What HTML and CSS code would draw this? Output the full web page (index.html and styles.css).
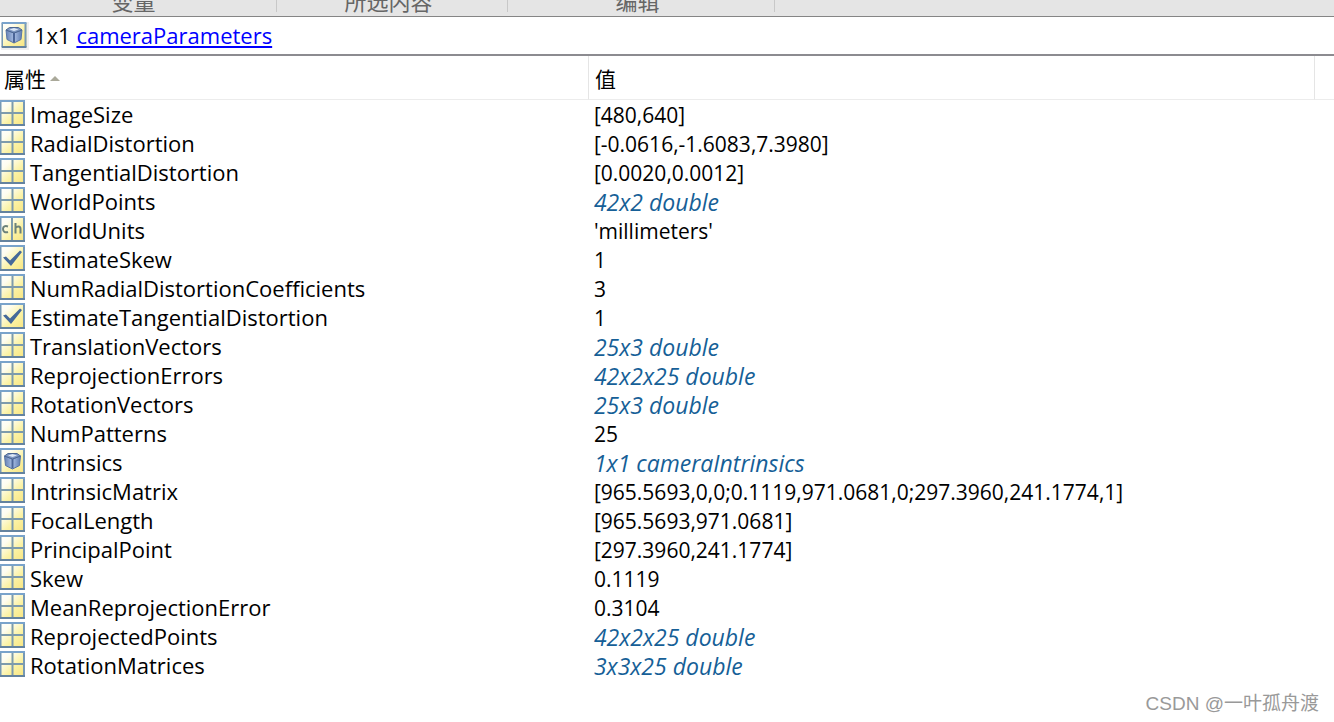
FILE: index.html
```html
<!DOCTYPE html>
<html lang="zh-CN">
<head>
<meta charset="utf-8">
<title>cameraParameters</title>
<link rel="stylesheet" href="styles.css">
</head>
<body>
<svg class="sprite" aria-hidden="true">
  <defs>
    <linearGradient id="paper" x1="0" y1="0" x2="1" y2="1">
      <stop offset="0" stop-color="#ffffff"/><stop offset="0.25" stop-color="#fefdf0"/><stop offset="0.6" stop-color="#fbf2a4"/><stop offset="1" stop-color="#f7e480"/>
    </linearGradient>
    <linearGradient id="frame" x1="0" y1="0" x2="0" y2="1">
      <stop offset="0" stop-color="#79a3cb"/><stop offset="1" stop-color="#64839f"/>
    </linearGradient>
    <linearGradient id="side" x1="0" y1="0" x2="1" y2="0">
      <stop offset="0" stop-color="#6480b4"/><stop offset="0.5" stop-color="#a9bfe4"/><stop offset="1" stop-color="#5e7bb0"/>
    </linearGradient>
    <symbol id="tile" viewBox="0 0 26 26">
      <path d="M0 1H25V25H0Z" fill="url(#paper)"/>
      <path d="M0.500 1V25M24 1V25" fill="none" stroke="#7799b5" stroke-width="2"/>
      <path d="M0 0H25V2H0Z" fill="#79a3cb"/>
      <path d="M0 24H25V26H0Z" fill="#64839f"/>
    </symbol>
    <symbol id="matrix" viewBox="0 0 26 26">
      <use href="#tile"/>
      <path d="M12.500 2V24M1 13H24" fill="none" stroke="#7d9bac" stroke-width="2"/>
    </symbol>
    <symbol id="char" viewBox="0 0 26 26">
      <use href="#tile"/>
      <path d="M12 2V24" fill="none" stroke="#7d9bac" stroke-width="2"/>
      <path d="M8 10.500C5 9.500 3 10.500 3 13S5 17 8 16M15.500 7V17.500M15.500 12C17 10 20.500 9.500 20.500 13V17.500" fill="none" stroke="#6d8279" stroke-width="2"/>
    </symbol>
    <symbol id="logical" viewBox="0 0 26 26">
      <use href="#tile"/>
      <path d="M3 12.500L6 11.500L10 15.500L20 5.500L22 7L11 21Z" fill="#45699a"/>
    </symbol>
    <symbol id="object" viewBox="0 0 26 26">
      <use href="#tile"/>
      <path d="M4.500 8L12.500 11L20.500 8L19.500 17.500L12.500 21L5.500 17.500Z" fill="url(#side)" stroke="#5875a6" stroke-width="1"/>
      <path d="M4.500 8L8 5.500H17L20.500 8L12.500 11Z" fill="#7f98c2" stroke="#4b6692" stroke-width="1"/>
      <path d="M8 7.500L12.500 6L17 7.500L12.500 9Z" fill="#dce7f6"/>
      <path d="M12.500 11V20.500" stroke="#4b6597" stroke-width="2"/>
    </symbol>
  </defs>
</svg>

<header class="ribbon">
  <div class="group group-variable">变量</div>
  <div class="group group-selection">所选内容</div>
  <div class="group group-edit">编辑</div>
</header>

<div class="summary">
  <svg class="icon summary-icon"><use href="#object"/></svg>
  <span>1x1 <a href="#properties">cameraParameters</a></span>
</div>

<main>
  <table class="properties" id="properties">
    <colgroup><col class="col-name"><col class="col-value"><col></colgroup>
    <thead>
      <tr><th scope="col">属性<span class="sort"></span></th><th scope="col">值</th><td></td></tr>
    </thead>
    <tbody>
      <tr><th scope="row"><svg class="icon"><use href="#matrix"/></svg>ImageSize</th><td>[480,640]</td></tr>
      <tr><th scope="row"><svg class="icon"><use href="#matrix"/></svg>RadialDistortion</th><td>[-0.0616,-1.6083,7.3980]</td></tr>
      <tr><th scope="row"><svg class="icon"><use href="#matrix"/></svg>TangentialDistortion</th><td>[0.0020,0.0012]</td></tr>
      <tr><th scope="row"><svg class="icon"><use href="#matrix"/></svg>WorldPoints</th><td class="ref">42x2 double</td></tr>
      <tr><th scope="row"><svg class="icon"><use href="#char"/></svg>WorldUnits</th><td>'millimeters'</td></tr>
      <tr><th scope="row"><svg class="icon"><use href="#logical"/></svg>EstimateSkew</th><td>1</td></tr>
      <tr><th scope="row"><svg class="icon"><use href="#matrix"/></svg>NumRadialDistortionCoefficients</th><td>3</td></tr>
      <tr><th scope="row"><svg class="icon"><use href="#logical"/></svg>EstimateTangentialDistortion</th><td>1</td></tr>
      <tr><th scope="row"><svg class="icon"><use href="#matrix"/></svg>TranslationVectors</th><td class="ref">25x3 double</td></tr>
      <tr><th scope="row"><svg class="icon"><use href="#matrix"/></svg>ReprojectionErrors</th><td class="ref">42x2x25 double</td></tr>
      <tr><th scope="row"><svg class="icon"><use href="#matrix"/></svg>RotationVectors</th><td class="ref">25x3 double</td></tr>
      <tr><th scope="row"><svg class="icon"><use href="#matrix"/></svg>NumPatterns</th><td>25</td></tr>
      <tr><th scope="row"><svg class="icon"><use href="#object"/></svg>Intrinsics</th><td class="ref">1x1 cameraIntrinsics</td></tr>
      <tr><th scope="row"><svg class="icon"><use href="#matrix"/></svg>IntrinsicMatrix</th><td>[965.5693,0,0;0.1119,971.0681,0;297.3960,241.1774,1]</td></tr>
      <tr><th scope="row"><svg class="icon"><use href="#matrix"/></svg>FocalLength</th><td>[965.5693,971.0681]</td></tr>
      <tr><th scope="row"><svg class="icon"><use href="#matrix"/></svg>PrincipalPoint</th><td>[297.3960,241.1774]</td></tr>
      <tr><th scope="row"><svg class="icon"><use href="#matrix"/></svg>Skew</th><td>0.1119</td></tr>
      <tr><th scope="row"><svg class="icon"><use href="#matrix"/></svg>MeanReprojectionError</th><td>0.3104</td></tr>
      <tr><th scope="row"><svg class="icon"><use href="#matrix"/></svg>ReprojectedPoints</th><td class="ref">42x2x25 double</td></tr>
      <tr><th scope="row"><svg class="icon"><use href="#matrix"/></svg>RotationMatrices</th><td class="ref">3x3x25 double</td></tr>
    </tbody>
  </table>
</main>

<footer class="credit">CSDN @一叶孤舟渡</footer>
</body>
</html>
```
FILE: styles.css
```css
* {
  box-sizing: border-box;
}

body {
  margin: 0;
  background: #fff;
  color: #000;
  font: 22px/29px "Open Sans", "Noto Sans CJK SC", sans-serif;
}

.sprite {
  position: absolute;
  width: 0;
  height: 0;
}

.icon {
  flex: none;
  width: 26px;
  height: 26px;
}

.ribbon {
  display: flex;
  align-items: flex-end;
  height: 17px;
  overflow: hidden;
  background: #e5e5e5;
  border-bottom: 1px solid #858585;
  color: #666;
}

.group {
  display: flex;
  flex: none;
  align-items: flex-end;
  justify-content: center;
  height: 29px;
  margin-bottom: 4px;
  border-right: 1px solid #c8c8c8;
  line-height: 22px;
}

.group-variable {
  width: 277px;
  padding-right: 9px;
}

.group-selection {
  width: 231px;
  padding-right: 7px;
}

.group-edit {
  width: 267px;
  padding-right: 7px;
}

.summary {
  display: flex;
  align-items: center;
  gap: 5px;
  height: 39px;
  padding-left: 1px;
  border-bottom: 2px solid #8c8b90;
}

.summary-icon {
  width: 28px;
  height: 28px;
  padding: 0 1px 2px 0;
  background: #efefef;
}

.summary a {
  color: #00f;
}

.properties {
  width: 100%;
  table-layout: fixed;
  border-collapse: separate;
  border-spacing: 0;
}

.col-name {
  width: 44.15%;
}

.col-value {
  width: 54.45%;
}

.properties th,
.properties td {
  padding: 0;
  height: 29px;
  font-weight: normal;
  text-align: left;
  white-space: nowrap;
}

.properties thead th,
.properties thead td {
  height: 44px;
  padding: 4px 0 0 4px;
  border-bottom: 1px solid #ececec;
  font-size: 21px;
}

.properties thead th {
  border-right: 1px solid #e5e5e5;
}

.properties thead th + th {
  padding-left: 6px;
}

.properties tbody th {
  display: flex;
  gap: 4px;
}

.properties tbody td {
  padding: 1px 0 0 5px;
  font-size: 21px;
  line-height: 28px;
}

.properties tbody .ref {
  color: #165f97;
  font-size: 23px;
  font-style: italic;
}

.sort {
  display: inline-block;
  margin-left: 4px;
  vertical-align: 6px;
  border: 5px solid transparent;
  border-top-width: 0;
  border-bottom-color: #aaa99a;
}

.credit {
  padding: 10px 15px 0 0;
  color: #999;
  font: 19px/28px "Liberation Sans", "Noto Sans CJK SC", sans-serif;
  text-align: right;
}
```
